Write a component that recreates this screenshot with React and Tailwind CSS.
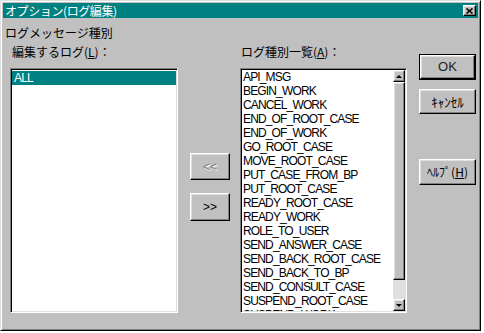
import React from 'react';

const logTypes = [
  'API_MSG',
  'BEGIN_WORK',
  'CANCEL_WORK',
  'END_OF_ROOT_CASE',
  'END_OF_WORK',
  'GO_ROOT_CASE',
  'MOVE_ROOT_CASE',
  'PUT_CASE_FROM_BP',
  'PUT_ROOT_CASE',
  'READY_ROOT_CASE',
  'READY_WORK',
  'ROLE_TO_USER',
  'SEND_ANSWER_CASE',
  'SEND_BACK_ROOT_CASE',
  'SEND_BACK_TO_BP',
  'SEND_CONSULT_CASE',
  'SUSPEND_ROOT_CASE',
  'SUSPEND_WORK',
];

const raised =
  'border border-t-white border-l-white border-r-black border-b-black bg-[#c0c0c0] shadow-[inset_-1px_-1px_#808080,inset_1px_1px_#dfdfdf]';
const sunken =
  'border border-t-[#808080] border-l-[#808080] border-r-white border-b-white p-[1px] shadow-[inset_1px_1px_#000,inset_-1px_-1px_#dfdfdf]';
const jp = "font-['Noto_Sans_CJK_JP',sans-serif]";
const latin = "font-['Liberation_Sans','Noto_Sans_CJK_JP',sans-serif]";

function Arrow({ up }) {
  return (
    <div className={`${raised} flex h-[12px] w-[12px] shrink-0 items-center justify-center`}>
      <div
        className={
          up
            ? 'h-0 w-0 border-x-[3px] border-b-[3px] border-x-transparent border-b-black'
            : 'h-0 w-0 border-x-[3px] border-t-[3px] border-x-transparent border-t-black'
        }
      />
    </div>
  );
}

export default function App() {
  return (
    <div className="h-[333px] w-[484px] bg-white">
      <div className="flex h-[331px] w-[481px] flex-col border border-t-[#dfdfdf] border-l-[#dfdfdf] border-r-black border-b-black bg-[#c0c0c0] p-[2px] shadow-[inset_1px_1px_#fff,inset_-1px_-1px_#808080]">
        {/* Title bar */}
        <div className="flex h-[15px] shrink-0 items-center justify-between bg-[#008080] pl-[2px] pr-[2px]">
          <span className={`${jp} text-[12px] leading-[14px] tracking-[-0.4px] text-white`}>オプション(ログ編集)</span>
          <div className={`${raised} flex h-[11px] w-[13px] items-center justify-center`}>
            <svg width="7" height="6" viewBox="0 0 7 6">
              <path d="M0.5 0.5 L6.5 5.5 M6.5 0.5 L0.5 5.5" stroke="#000" strokeWidth="1.6" />
            </svg>
          </div>
        </div>

        <div className={`${jp} mt-[8px] pl-[2px] text-[12px] leading-[14px] text-black`}>ログメッセージ種別</div>

        <div className="mt-[4px] flex items-start">
          {/* Left list */}
          <div className="ml-[7px] flex w-[168px] flex-col">
            <div className={`${jp} h-[24px] pl-[2px] pt-[1px] text-[12px] leading-[14px] text-black`}>
              編集するログ(<span className="underline">L</span>)：
            </div>
            <div className={`${sunken} h-[245px] bg-white`}>
              <div className={`${latin} mt-[1px] h-[14px] bg-[#008080] pl-[2px] text-[12px] leading-[14px] tracking-[-0.85px] text-white`}>
                ALL
              </div>
            </div>
          </div>

          {/* Move buttons */}
          <div className="ml-[12px] mt-[109px] flex flex-col gap-[13px]">
            <div className={`${raised} flex h-[27px] w-[40px] items-center justify-center`}>
              <span className={`${latin} text-[12px] text-[#808080] [text-shadow:1px_1px_0_#fff]`}>&lt;&lt;</span>
            </div>
            <div className={`${raised} flex h-[28px] w-[40px] items-center justify-center`}>
              <span className={`${latin} text-[12px] text-black`}>&gt;&gt;</span>
            </div>
          </div>

          {/* Right list */}
          <div className="ml-[10px] flex w-[167px] flex-col">
            <div className={`${jp} h-[24px] pl-[1px] pt-[1px] text-[12px] leading-[14px] text-black`}>
              ログ種別一覧(<span className="underline">A</span>)：
            </div>
            <div className={`${sunken} flex h-[245px] bg-white`}>
              <div className="min-w-0 flex-1 overflow-hidden pl-[1px]">
                {logTypes.map((t) => (
                  <div
                    key={t}
                    className={`${latin} h-[14px] whitespace-nowrap text-[12px] leading-[14px] tracking-[-0.85px] text-black`}
                  >
                    {t}
                  </div>
                ))}
              </div>
              <div className="flex w-[12px] flex-col bg-[#dfdfdf]">
                <Arrow up />
                <div className={`${raised} h-[198px] w-[12px]`} />
                <div className="flex-1" />
                <Arrow />
              </div>
            </div>
          </div>

          {/* Dialog buttons */}
          <div className="ml-[12px] mt-[10px] flex w-[57px] flex-col">
            <div className="border border-black">
              <div className={`${raised} flex h-[24px] items-center justify-center`}>
                <span className={`${latin} text-[13px] font-normal text-[#202020]`}>OK</span>
              </div>
            </div>
            <div className={`${raised} mt-[9px] flex h-[25px] items-center justify-center`}>
              <span className={`${jp} text-[13px] text-black`}>ｷｬﾝｾﾙ</span>
            </div>
            <div className={`${raised} mt-[45px] flex h-[26px] items-center justify-center`}>
              <span className={`${jp} text-[12px] text-black`}>
                ﾍﾙﾌﾟ(<span className="underline">H</span>)
              </span>
            </div>
          </div>
        </div>
      </div>
    </div>
  );
}
